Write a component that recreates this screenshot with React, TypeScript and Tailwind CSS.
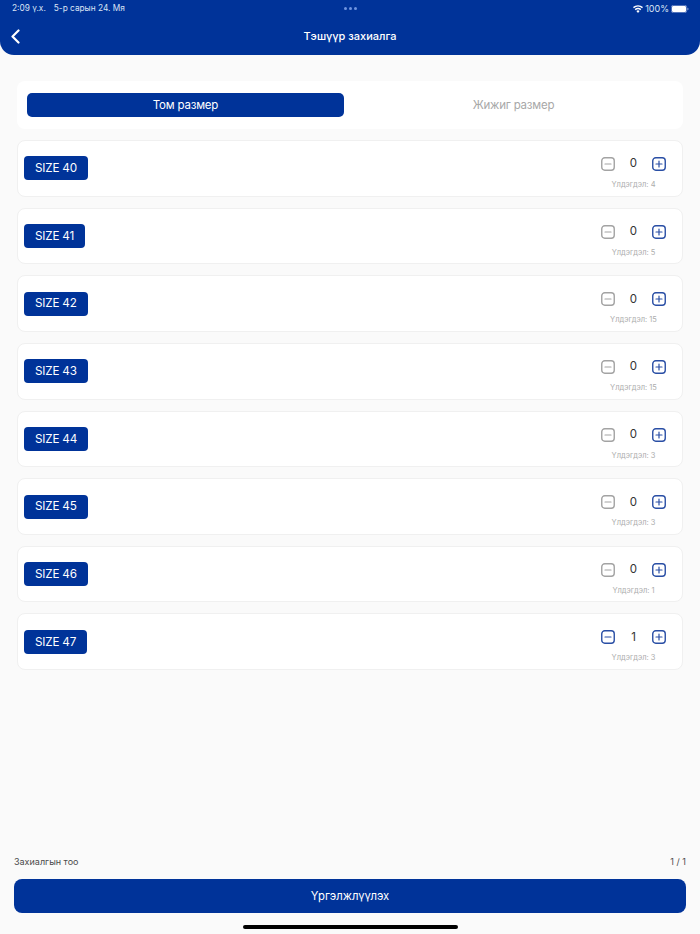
import React from "react";

const rows = [
  { size: "SIZE 40", count: 0, left: 4 },
  { size: "SIZE 41", count: 0, left: 5 },
  { size: "SIZE 42", count: 0, left: 15 },
  { size: "SIZE 43", count: 0, left: 15 },
  { size: "SIZE 44", count: 0, left: 3 },
  { size: "SIZE 45", count: 0, left: 3 },
  { size: "SIZE 46", count: 0, left: 1 },
  { size: "SIZE 47", count: 1, left: 3 },
];

function StepIcon({ plus, active }: { plus?: boolean; active: boolean }) {
  const c = active ? "#2a4fa5" : "#a3a3a3";
  return (
    <svg width="14" height="14" viewBox="0 0 14 14" fill="none">
      <rect x="0.75" y="0.75" width="12.5" height="12.5" rx="3" stroke={c} strokeWidth="1.4" />
      <path d="M4 7h6" stroke={c} strokeWidth="1.2" strokeLinecap="round" />
      {plus && <path d="M7 4v6" stroke={c} strokeWidth="1.2" strokeLinecap="round" />}
    </svg>
  );
}

export default function App() {
  return (
    <div className="h-[934px] w-[700px] flex flex-col bg-[#fafafa] overflow-hidden font-['Inter',sans-serif]">
      <header className="h-[55px] bg-[#003399] rounded-b-[14px] text-white shrink-0 flex flex-col">
        <div className="h-[17px] flex items-center justify-between pl-[12px] pr-[11px] text-[8.3px] text-[#dbe4f5]">
          <div className="flex gap-[8px] w-[200px]">
            <span>2:09 ү.х.</span>
            <span>5-р сарын 24. Мя</span>
          </div>
          <div className="flex gap-[2px]">
            <span className="w-[3px] h-[3px] rounded-full bg-[#6f95e0]" />
            <span className="w-[3px] h-[3px] rounded-full bg-[#6f95e0]" />
            <span className="w-[3px] h-[3px] rounded-full bg-[#6f95e0]" />
          </div>
          <div className="flex items-center justify-end gap-[2px] w-[200px] text-[9px]">
            <svg width="10" height="8" viewBox="0 0 10 8" fill="white">
              <path d="M5 8 3.4 6.1a2.3 2.3 0 0 1 3.2 0L5 8Z" />
              <path d="M2.6 5.2 1.7 4.1a5 5 0 0 1 6.6 0l-.9 1.1a3.6 3.6 0 0 0-4.8 0Z" />
              <path d="M.9 3.2 0 2.1a7.6 7.6 0 0 1 10 0l-.9 1.1a6.3 6.3 0 0 0-8.2 0Z" />
            </svg>
            <span>100%</span>
            <svg width="18" height="8" viewBox="0 0 18 8" fill="none">
              <rect x="0.3" y="0.3" width="15.4" height="7.4" rx="2" stroke="#a9bbe2" strokeWidth="0.6" />
              <rect x="1" y="1" width="14" height="6" rx="1.3" fill="white" />
              <path d="M16.5 2.8c.7.2 1 .7 1 1.2s-.3 1-1 1.2V2.8Z" fill="#a9bbe2" />
            </svg>
          </div>
        </div>
        <div className="relative flex-1 flex items-center justify-center">
          <svg className="absolute left-[10px] top-[12px]" width="11" height="15" viewBox="0 0 11 15" fill="none">
            <path d="M8.5 1.5 2.5 7.5l6 6" stroke="white" strokeWidth="2.2" strokeLinecap="round" strokeLinejoin="round" />
          </svg>
          <span className="text-[11px] font-medium">Тэшүүр захиалга</span>
        </div>
      </header>

      <main className="px-[17px] pt-[26px] flex flex-col">
        <div className="h-[48px] bg-white rounded-[8px] flex items-center pl-[10px] pr-[10px] gap-[6px] mb-[11px]">
          <div className="w-[317px] h-[24px] bg-[#003399] rounded-[5px] flex items-center justify-center text-white text-[11.5px] tracking-[-0.2px] pt-[1px]">
            Том размер
          </div>
          <div className="flex-1 flex items-center justify-center text-[#a8a8a8] text-[11.5px] tracking-[-0.2px] pl-[4px] pt-[1px]">Жижиг размер</div>
        </div>

        <div className="flex flex-col gap-[11px]">
          {rows.map((r) => (
            <div
              key={r.size}
              className="h-[56.65px] bg-white rounded-[8px] border border-[#f0f0f0] flex items-center justify-between pl-[6px] pr-[16px]"
            >
              <div className="h-[24px] bg-[#003399] rounded-[4px] flex items-center px-[11px] pt-[1px] text-white text-[11.7px] tracking-[-0.2px]">
                {r.size}
              </div>
              <div className="w-[65px] self-start flex flex-col items-center pt-[16px]">
                <div className="w-full flex items-center justify-between h-[14px]">
                  <StepIcon active={r.count > 0} />
                  <span className="text-[11.5px] text-[#333333]">{r.count}</span>
                  <StepIcon plus active />
                </div>
                <div className="mt-[9px] text-[7.5px] leading-[10px] text-[#adadad] whitespace-nowrap">
                  Үлдэгдэл: {r.left}
                </div>
              </div>
            </div>
          ))}
        </div>
      </main>

      <footer className="mt-auto px-[14px] flex flex-col">
        <div className="flex items-center justify-between text-[9px] text-[#4a4a4a] mb-[11px] leading-[12px]">
          <span>Захиалгын тоо</span>
          <span>1 / 1</span>
        </div>
        <div className="h-[34px] bg-[#003399] rounded-[8px] flex items-center justify-center text-white text-[11.3px] pt-[1px]">
          Үргэлжлүүлэх
        </div>
        <div className="mt-[12px] mb-[5px] self-center w-[215px] h-[4px] bg-black rounded-full" />
      </footer>
    </div>
  );
}
